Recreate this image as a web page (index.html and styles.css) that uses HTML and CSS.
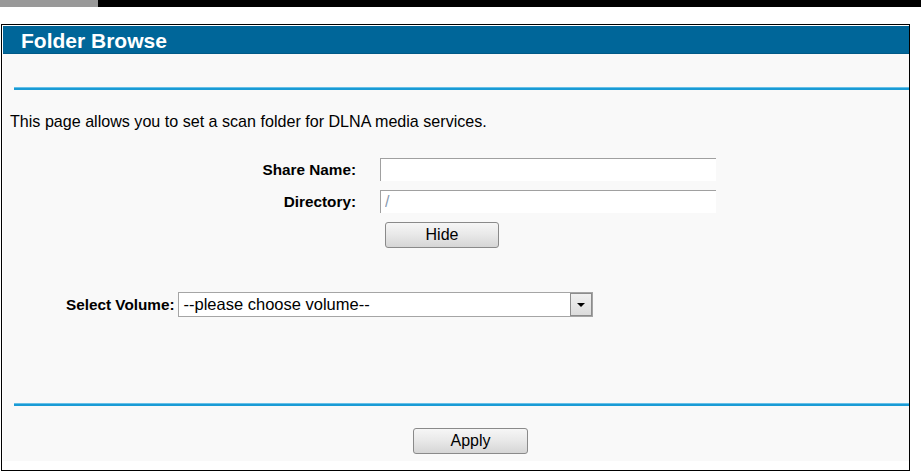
FILE: index.html
```html
<!DOCTYPE html>
<html>
<head>
<meta charset="utf-8">
<link rel="stylesheet" href="styles.css">
</head>
<body>
<div class="topbar"><div class="topbar-grey"></div></div>
<div class="frame">
  <div class="panel">
    <div class="header">Folder Browse</div>
    <div class="content">
      <div class="rule"></div>
      <p class="intro">This page allows you to set a scan folder for DLNA media services.</p>
      <div class="form">
        <label class="label">Share Name:</label>
        <input class="field" type="text" value="">
        <label class="label">Directory:</label>
        <input class="field field-dir" type="text" value="/" readonly>
        <span></span>
        <div><button class="btn btn-hide" type="button">Hide</button></div>
      </div>
      <div class="volume-row">
        <span class="label">Select Volume:</span>
        <div class="select">
          <span class="select-text">--please choose volume--</span>
          <span class="select-arrow"><span class="tri"></span></span>
        </div>
      </div>
      <div class="rule rule-bottom"></div>
      <div class="actions"><button class="btn btn-apply" type="button">Apply</button></div>
    </div>
  </div>
</div>
</body>
</html>
```
FILE: styles.css
```css
html, body {
  margin: 0;
  padding: 0;
  background: #ffffff;
  font-family: "Liberation Sans", Arial, sans-serif;
  color: #000;
}
.topbar {
  height: 7px;
  background: #000;
  display: flex;
}
.topbar-grey {
  width: 98px;
  background: #999999;
}
.frame {
  margin-top: 17px;
  margin-left: 1px;
  width: 906px;
  height: 444px;
  border: 1px solid #000;
  padding: 1px 0 0 1px;
  background: #fff;
}
.panel {
  background: #f9f9f9;
  height: 435px;
}
.header {
  height: 27px;
  background: #006699;
  border-bottom: 1px solid #005a88;
  color: #fff;
  font-weight: bold;
  font-size: 21px;
  line-height: 29px;
  padding-left: 18px;
}
.content {
  display: flex;
  flex-direction: column;
}
.rule {
  margin-top: 33px;
  margin-left: 11px;
  height: 2px;
  background: #1a9bd5;
  border-top: 1px solid #66c0e8;
}
.intro {
  margin: 22px 0 0 7px;
  font-size: 16.1px;
  line-height: 18px;
}
.form {
  margin-top: 29px;
  display: grid;
  grid-template-columns: 353px 336px;
  column-gap: 24px;
  row-gap: 9px;
  align-items: center;
}
.form .field:first-of-type {
  margin-top: -1px;
}
.label {
  font-weight: bold;
  font-size: 15.3px;
  text-align: right;
}
.field {
  box-sizing: border-box;
  height: 23px;
  width: 336px;
  margin: 0;
  border: 0;
  border-top: 1px solid #a0a0a0;
  border-left: 1px solid #a0a0a0;
  background: #fff;
  font-family: "Liberation Sans", Arial, sans-serif;
  font-size: 16px;
  padding: 0 4px;
  outline: none;
}
.field-dir {
  color: #8a9aae;
}
.btn {
  box-sizing: border-box;
  height: 26px;
  border: 1px solid #8a8a8a;
  border-radius: 3px;
  background: linear-gradient(#f6f6f6, #e8e8e8 50%, #d6d6d6);
  font-family: "Liberation Sans", Arial, sans-serif;
  font-size: 16px;
  color: #000;
  padding: 0;
  margin: 0;
}
.btn-hide {
  width: 114px;
  margin-left: 5px;
  margin-top: 0;
}
.volume-row {
  margin-top: 44px;
  padding-left: 63px;
  display: flex;
  align-items: center;
  gap: 3px;
}
.select {
  box-sizing: border-box;
  width: 415px;
  height: 25px;
  border: 1px solid #a5a5a5;
  background: #fff;
  display: flex;
  align-items: center;
  justify-content: space-between;
}
.select-text {
  font-size: 16.5px;
  padding-left: 5px;
}
.select-arrow {
  box-sizing: border-box;
  width: 22px;
  height: 23px;
  border: 1px solid #8c8c8c;
  background: linear-gradient(#f0f0f0, #dcdcdc);
  display: flex;
  align-items: center;
  justify-content: center;
}
.tri {
  width: 0;
  height: 0;
  border-left: 4px solid transparent;
  border-right: 4px solid transparent;
  border-top: 4px solid #000;
}
.rule-bottom {
  margin-top: 86px;
}
.actions {
  margin-top: 22px;
  padding-left: 410px;
}
.btn-apply {
  width: 115px;
}
```
